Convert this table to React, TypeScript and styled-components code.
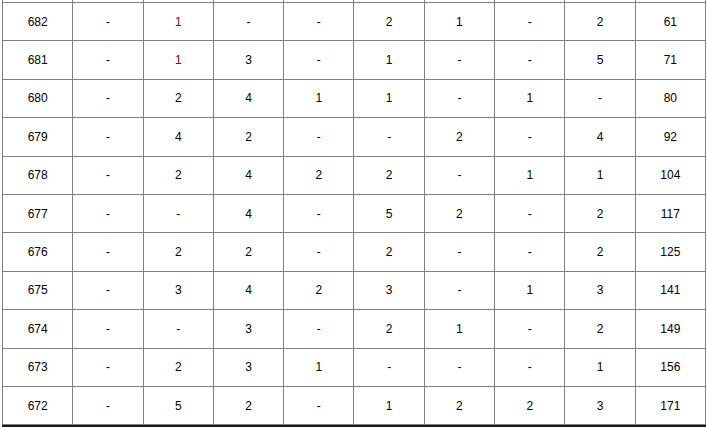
import React from "react";
import styled, { createGlobalStyle } from "styled-components";

const Global = createGlobalStyle`
  html, body { margin: 0; padding: 0; background: #fff; }
  body { font-family: "Liberation Sans", Arial, sans-serif; overflow: hidden; }
`;

const Frame = styled.div`
  padding-left: 2px;
  width: 704px;
`;

const Table = styled.table`
  border-collapse: collapse;
  table-layout: fixed;
  width: 704px;
  font-family: "Liberation Sans", Arial, sans-serif;
  font-size: 12px;
  color: #000;
`;

const StubCell = styled.td`
  height: 2px;
  padding: 0;
  border: 1px solid #808080;
  border-top: none;
  line-height: 0;
  font-size: 0;
`;

const Cell = styled.td<{ $tone?: "red" | "plain" }>`
  height: 37.4px;
  padding: 0;
  border: 1px solid #808080;
  text-align: center;
  vertical-align: middle;
  color: ${(p) => (p.$tone === "red" ? "#8b0000" : "#000")};
`;

const BottomRule = styled.div`
  height: 2px;
  width: 704px;
  background: #1a1a1a;
`;

const rows: string[][] = [
  ["682", "-", "1", "-", "-", "2", "1", "-", "2", "61"],
  ["681", "-", "1", "3", "-", "1", "-", "-", "5", "71"],
  ["680", "-", "2", "4", "1", "1", "-", "1", "-", "80"],
  ["679", "-", "4", "2", "-", "-", "2", "-", "4", "92"],
  ["678", "-", "2", "4", "2", "2", "-", "1", "1", "104"],
  ["677", "-", "-", "4", "-", "5", "2", "-", "2", "117"],
  ["676", "-", "2", "2", "-", "2", "-", "-", "2", "125"],
  ["675", "-", "3", "4", "2", "3", "-", "1", "3", "141"],
  ["674", "-", "-", "3", "-", "2", "1", "-", "2", "149"],
  ["673", "-", "2", "3", "1", "-", "-", "-", "1", "156"],
  ["672", "-", "5", "2", "-", "1", "2", "2", "3", "171"],
];

export default function App() {
  return (
    <>
      <Global />
      <Frame>
        <Table>
          <tbody>
            <tr>
              {rows[0].map((_, i) => (
                <StubCell key={i} />
              ))}
            </tr>
            {rows.map((r) => (
              <tr key={r[0]}>
                {r.map((v, i) => (
                  <Cell key={i} $tone={i === 2 && v === "1" ? "red" : "plain"}>
                    {v}
                  </Cell>
                ))}
              </tr>
            ))}
          </tbody>
        </Table>
        <BottomRule />
      </Frame>
    </>
  );
}
